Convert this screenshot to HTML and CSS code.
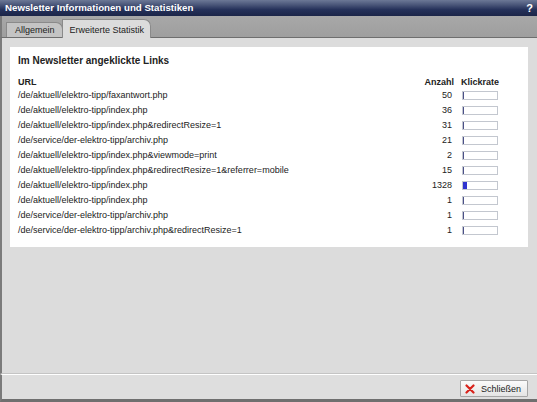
FILE: index.html
```html
<!DOCTYPE html>
<html lang="de">
<head>
<meta charset="utf-8">
<title>Newsletter Informationen und Statistiken</title>
<link rel="stylesheet" href="styles.css">
</head>
<body>
<div class="dialog">
  <div class="titlebar">
    <span class="title">Newsletter Informationen und Statistiken</span>
    <span class="help">?</span>
  </div>
  <div class="tabstrip">
    <div class="tab">Allgemein</div>
    <div class="tab active">Erweiterte Statistik</div>
  </div>
  <div class="content">
    <div class="panel">
      <h2 class="panel-title">Im Newsletter angeklickte Links</h2>
      <div class="stats">
        <div class="th">URL</div><div class="th num head-num">Anzahl</div><div class="th rate">Klickrate</div>

        <div class="td">/de/aktuell/elektro-tipp/faxantwort.php</div><div class="td num">50</div><div class="td rate"><span class="bar"><span class="fill" style="width:1px"></span></span></div>
        <div class="td">/de/aktuell/elektro-tipp/index.php</div><div class="td num">36</div><div class="td rate"><span class="bar"><span class="fill" style="width:1px"></span></span></div>
        <div class="td">/de/aktuell/elektro-tipp/index.php&amp;redirectResize=1</div><div class="td num">31</div><div class="td rate"><span class="bar"><span class="fill" style="width:1px"></span></span></div>
        <div class="td">/de/service/der-elektro-tipp/archiv.php</div><div class="td num">21</div><div class="td rate"><span class="bar"><span class="fill" style="width:1px"></span></span></div>
        <div class="td">/de/aktuell/elektro-tipp/index.php&amp;viewmode=print</div><div class="td num">2</div><div class="td rate"><span class="bar"><span class="fill" style="width:1px"></span></span></div>
        <div class="td">/de/aktuell/elektro-tipp/index.php&amp;redirectResize=1&amp;referrer=mobile</div><div class="td num">15</div><div class="td rate"><span class="bar"><span class="fill" style="width:1px"></span></span></div>
        <div class="td">/de/aktuell/elektro-tipp/index.php</div><div class="td num">1328</div><div class="td rate"><span class="bar"><span class="fill big" style="width:4px"></span></span></div>
        <div class="td">/de/aktuell/elektro-tipp/index.php</div><div class="td num">1</div><div class="td rate"><span class="bar"><span class="fill" style="width:1px"></span></span></div>
        <div class="td">/de/service/der-elektro-tipp/archiv.php</div><div class="td num">1</div><div class="td rate"><span class="bar"><span class="fill" style="width:1px"></span></span></div>
        <div class="td">/de/service/der-elektro-tipp/archiv.php&amp;redirectResize=1</div><div class="td num">1</div><div class="td rate"><span class="bar"><span class="fill" style="width:1px"></span></span></div>
      </div>
    </div>
  </div>
  <div class="footer">
    <button class="btn" type="button">
      <svg class="btn-icon" width="10" height="10" viewBox="0 0 10 10" aria-hidden="true">
        <path d="M1.5 1.5 L8.5 8.5 M8.5 1.5 L1.5 8.5" stroke="#d8231b" stroke-width="2.2" stroke-linecap="round" fill="none"/>
      </svg>
      <span>Schließen</span>
    </button>
  </div>
</div>
</body>
</html>
```

FILE: styles.css
```css
html, body {
  margin: 0;
  padding: 0;
}

body {
  width: 537px;
  height: 402px;
  overflow: hidden;
  background: #dcdcdc;
  font-family: "Liberation Sans", Arial, sans-serif;
  color: #222;
}

.dialog {
  display: flex;
  flex-direction: column;
  height: 402px;
}

/* Title bar */
.titlebar {
  box-sizing: border-box;
  height: 16px;
  display: flex;
  align-items: center;
  justify-content: space-between;
  padding: 0 4px 0 5px;
  background: linear-gradient(#6c7896 0%, #4a5679 30%, #25315a 60%, #1b2548 100%);
  color: #fff;
  font-weight: bold;
  font-size: 9.7px;
  line-height: 16px;
}

.help {
  font-size: 11px;
}

/* Tabs */
.tabstrip {
  box-sizing: border-box;
  height: 22px;
  display: flex;
  align-items: flex-end;
  padding-left: 4px;
  background: linear-gradient(#a8a8a8, #9e9e9e);
  border-left: 2px solid #7b7b7b;
  border-bottom: 1px solid #6e6e6e;
}

.tab {
  box-sizing: border-box;
  height: 15px;
  line-height: 14px;
  padding: 0 7px 0 8px;
  font-size: 9px;
  color: #222;
  background: #c4c4c4;
  border: 1px solid #8a8a8a;
  border-bottom: none;
  border-radius: 0 7px 0 0;
}

.tab.active {
  height: 19px;
  margin-bottom: -1px;
  margin-left: -1px;
  padding: 3px 6px 0 7px;
  background: #dcdcdc;
  border-color: #8a8a8a;
}

/* Content */
.content {
  flex: 1;
  padding: 9px 9px 0 8px;
  background: #dcdcdc;
  border-left: 2px solid #7b7b7b;
  border-bottom: 1px solid #c4c4c4;
}

.panel {
  box-sizing: border-box;
  height: 200px;
  padding: 8px 8px 0 8px;
  background: #fff;
}

.panel-title {
  margin: 0;
  font-size: 10px;
  line-height: 12px;
  font-weight: bold;
  color: #222;
}

.stats {
  margin-top: 10px;
  display: grid;
  grid-template-columns: 1fr 50px 68px;
  font-size: 9px;
}

.th {
  font-weight: bold;
  line-height: 11px;
}

.head-num {
  margin-right: -2px;
}

.td {
  line-height: 15px;
  height: 15px;
  white-space: nowrap;
}

.num {
  text-align: right;
}

.th.rate {
  padding-left: 9px;
}

.td.rate {
  padding-left: 10px;
  display: flex;
  align-items: center;
}

.bar {
  box-sizing: border-box;
  display: flex;
  width: 36px;
  height: 9px;
  border: 1px solid #c3c7cf;
  background: #fff;
}

.fill {
  display: block;
  height: 100%;
  background: #4b5088;
}

.fill.big {
  background: #2f33cf;
}

/* Footer */
.footer {
  box-sizing: border-box;
  height: 28px;
  display: flex;
  justify-content: flex-end;
  align-items: flex-start;
  padding: 5px 9px 0 0;
  background: #dedede;
  border-top: 1px solid #fff;
  border-left: 2px solid #7b7b7b;
  border-bottom: 3px solid #6f6f6f;
}

.btn {
  box-sizing: border-box;
  height: 17px;
  width: 68px;
  display: flex;
  align-items: center;
  gap: 6px;
  margin: 0;
  padding: 0 6px 0 4px;
  font-family: "Liberation Sans", Arial, sans-serif;
  font-size: 9px;
  color: #222;
  background: linear-gradient(#fbfbfb, #e4e4e4);
  border: 1px solid #a6a6a6;
  border-radius: 1px;
}

.btn-icon {
  flex: none;
}
```
